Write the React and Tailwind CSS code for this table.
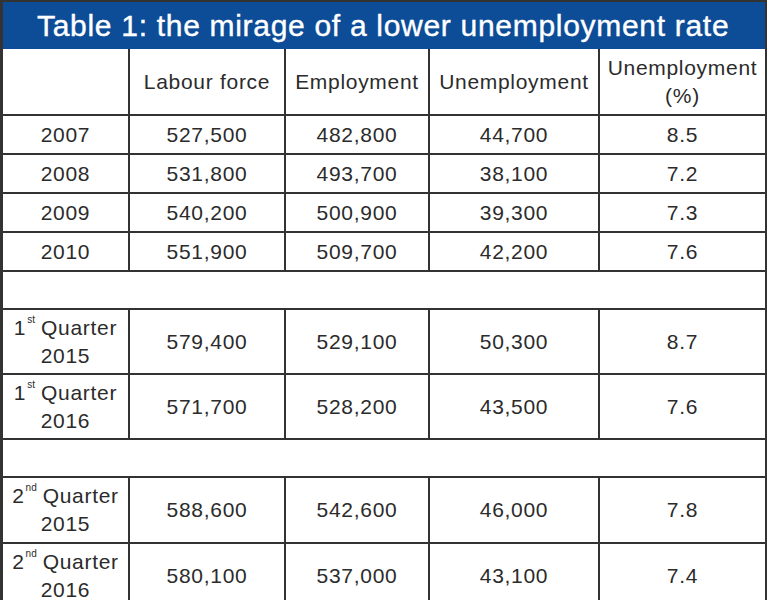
import React from "react";

const rowsA = [
  ["2007", "527,500", "482,800", "44,700", "8.5"],
  ["2008", "531,800", "493,700", "38,100", "7.2"],
  ["2009", "540,200", "500,900", "39,300", "7.3"],
  ["2010", "551,900", "509,700", "42,200", "7.6"],
];

const Q = ({ n, sup, year }) => (
  <span className="block leading-[28px]">
    {n}
    <sup className="text-[10px] align-[7px] tracking-normal ml-[1px] mr-[6px]">{sup}</sup>Quarter
    <br />
    {year}
  </span>
);

const cell = "border-2 border-[#333] text-center align-middle";

export default function App() {
  return (
    <div className="w-[770px] h-[600px] overflow-hidden bg-white">
      <div
        className="w-[767px] border-t-2 border-l-[3px] border-r-2 border-[#333] text-[#2b2b2b]"
        style={{ fontFamily: '"Liberation Sans", Arial, sans-serif' }}
      >
        <div className="h-[47px] bg-[#0d4c97] text-white text-[30px] leading-[47px] pl-[34px] tracking-[0.7px] [-webkit-text-stroke:0.4px_white]">
          Table 1: the mirage of a lower unemployment rate
        </div>
        <table className="w-full border-collapse table-fixed text-[21px] tracking-[0.7px] -mb-px">
          <colgroup>
            <col className="w-[126px]" />
            <col className="w-[156px]" />
            <col className="w-[144px]" />
            <col className="w-[170px]" />
            <col />
          </colgroup>
          <tbody>
            <tr className="h-[66px]">
              <td className={cell + " border-l-0 border-t-0"}></td>
              <td className={cell + " border-t-0"}>Labour force</td>
              <td className={cell + " border-t-0"}>Employment</td>
              <td className={cell + " border-t-0"}>Unemployment</td>
              <td className={cell + " border-t-0 border-r-0 leading-[28px]"}>
                Unemployment
                <br />
                (%)
              </td>
            </tr>
            {rowsA.map((r) => (
              <tr key={r[0]} className="h-[39px]">
                {r.map((c, i) => (
                  <td key={i} className={cell + (i === 0 ? " border-l-0" : "") + (i === 4 ? " border-r-0" : "")}>
                    {c}
                  </td>
                ))}
              </tr>
            ))}
            <tr className="h-[38px]">
              <td colSpan={5} className={cell + " border-x-0"}></td>
            </tr>
            <tr className="h-[65px]">
              <td className={cell + " border-l-0"}><Q n="1" sup="st" year="2015" /></td>
              <td className={cell}>579,400</td>
              <td className={cell}>529,100</td>
              <td className={cell}>50,300</td>
              <td className={cell + " border-r-0"}>8.7</td>
            </tr>
            <tr className="h-[65px]">
              <td className={cell + " border-l-0"}><Q n="1" sup="st" year="2016" /></td>
              <td className={cell}>571,700</td>
              <td className={cell}>528,200</td>
              <td className={cell}>43,500</td>
              <td className={cell + " border-r-0"}>7.6</td>
            </tr>
            <tr className="h-[38px]">
              <td colSpan={5} className={cell + " border-x-0"}></td>
            </tr>
            <tr className="h-[66px]">
              <td className={cell + " border-l-0"}><Q n="2" sup="nd" year="2015" /></td>
              <td className={cell}>588,600</td>
              <td className={cell}>542,600</td>
              <td className={cell}>46,000</td>
              <td className={cell + " border-r-0"}>7.8</td>
            </tr>
            <tr className="h-[66px]">
              <td className={cell + " border-l-0"}><Q n="2" sup="nd" year="2016" /></td>
              <td className={cell}>580,100</td>
              <td className={cell}>537,000</td>
              <td className={cell}>43,100</td>
              <td className={cell + " border-r-0"}>7.4</td>
            </tr>
          </tbody>
        </table>
      </div>
    </div>
  );
}
